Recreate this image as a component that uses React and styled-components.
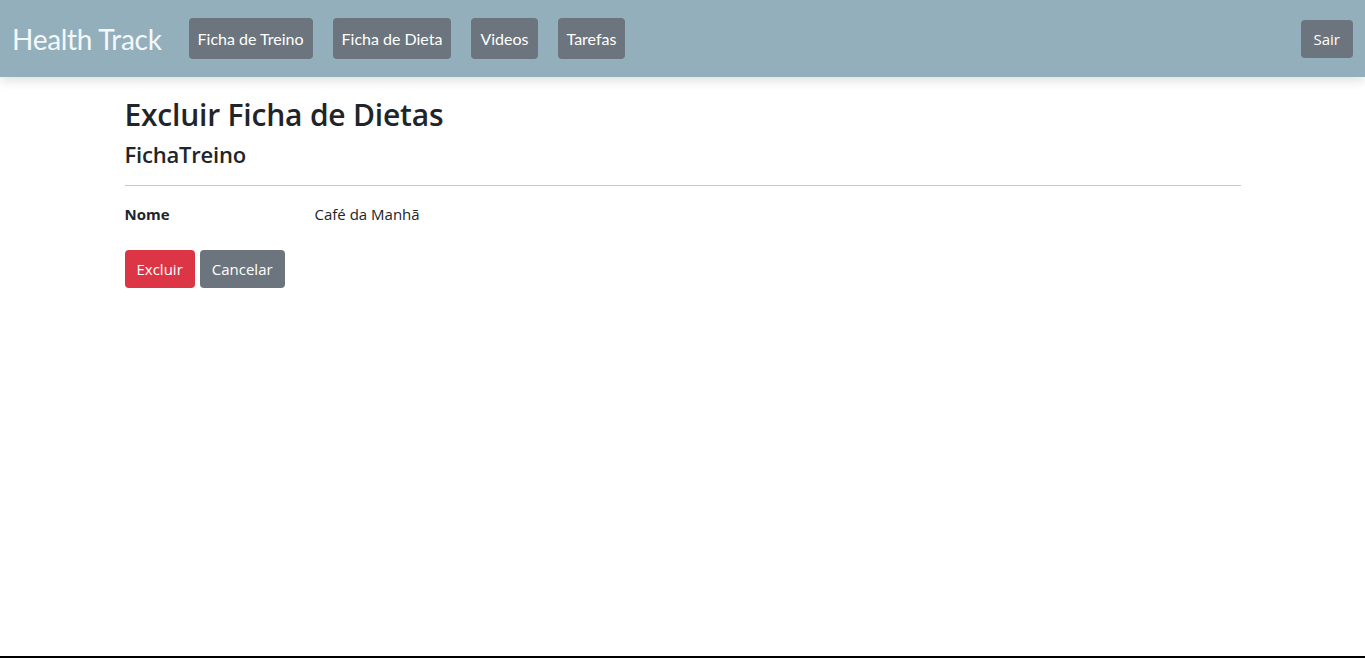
import React from "react";
import styled, { createGlobalStyle } from "styled-components";

const Global = createGlobalStyle`
  html, body { margin: 0; padding: 0; }
  body {
    font-family: "Open Sans", "Noto Sans", sans-serif;
    font-size: 16px;
    color: #212529;
    background: #fff;
  }
  * { box-sizing: border-box; }
`;

const Page = styled.div`
  min-height: 100vh;
  display: flex;
  flex-direction: column;
`;

const NavBar = styled.header`
  height: 77px;
  background: #92afbb;
  display: flex;
  align-items: center;
  padding: 0 12px;
  box-shadow: 0 4px 10px rgba(0, 0, 0, 0.12);
`;

const Brand = styled.a`
  font-family: Lato, sans-serif;
  font-size: 28px;
  color: #f4f8fb;
  text-decoration: none;
  margin-right: 27px;
  letter-spacing: -0.3px;
`;

const NavList = styled.nav`
  display: flex;
  gap: 20px;
  flex: 1;
`;

const NavButton = styled.a`
  display: inline-flex;
  align-items: center;
  height: 41px;
  padding: 0 9px;
  background: #6c757d;
  color: #fff;
  border-radius: 4px;
  font-family: Lato, sans-serif;
  font-size: 16px;
  text-decoration: none;
`;

const Button = styled.button`
  display: inline-flex;
  align-items: center;
  height: 38px;
  padding: 0 ${(p) => p.$px || 12}px;
  border: none;
  border-radius: 4px;
  background: ${(p) => (p.$danger ? "#dc3545" : "#6c757d")};
  color: #fff;
  font-family: "Open Sans", "Noto Sans", sans-serif;
  font-size: 15px;
  cursor: pointer;
`;

const Main = styled.main`
  flex: 1;
  width: 1140px;
  margin: 0 auto;
  padding: 0 12px;
`;

const Title = styled.h1`
  margin: 20px 0 0;
  font-size: 30px;
  font-weight: 600;
  line-height: 1.2;
  letter-spacing: -0.2px;
`;

const Subtitle = styled.h4`
  margin: 8px 0 0;
  font-size: 22px;
  font-weight: 600;
  line-height: 1.2;
  letter-spacing: -0.2px;
`;

const Rule = styled.hr`
  margin: 18px 0 0;
  border: none;
  border-top: 1px solid #c8c8c8;
`;

const Details = styled.dl`
  display: grid;
  grid-template-columns: 190px 1fr;
  margin: 18px 0 0;
  font-size: 15px;
`;

const Term = styled.dt`
  font-weight: 700;
`;

const Desc = styled.dd`
  margin: 0;
`;

const Actions = styled.div`
  display: flex;
  gap: 5px;
  margin-top: 26px;
`;

const Footer = styled.footer`
  height: 2px;
  background: #000;
`;

export default function App() {
  return (
    <>
      <Global />
      <Page>
        <NavBar>
          <Brand href="#">Health Track</Brand>
          <NavList>
            <NavButton href="#">Ficha de Treino</NavButton>
            <NavButton href="#">Ficha de Dieta</NavButton>
            <NavButton href="#">Videos</NavButton>
            <NavButton href="#">Tarefas</NavButton>
          </NavList>
          <Button $px={13}>Sair</Button>
        </NavBar>
        <Main>
          <Title>Excluir Ficha de Dietas</Title>
          <Subtitle>FichaTreino</Subtitle>
          <Rule />
          <Details>
            <Term>Nome</Term>
            <Desc>Café da Manhã</Desc>
          </Details>
          <Actions>
            <Button $danger>Excluir</Button>
            <Button>Cancelar</Button>
          </Actions>
        </Main>
        <Footer />
      </Page>
    </>
  );
}
